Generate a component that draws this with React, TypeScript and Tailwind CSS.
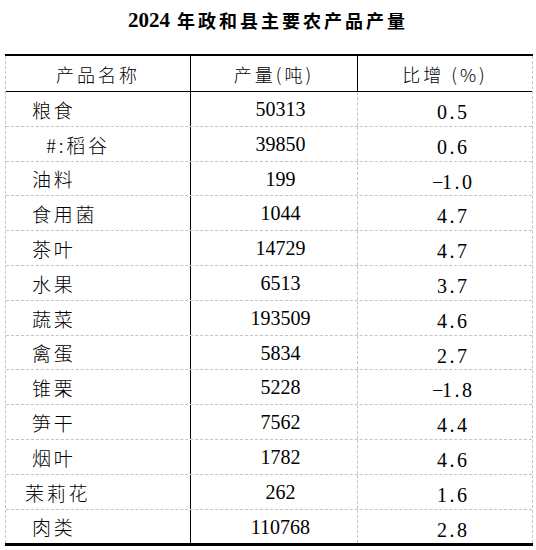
import React from "react";

type Row = { name: string; pl: string; value: string; pct: string; h: string };

const rows: Row[] = [
  { name: "粮食", pl: "pl-[26px]", value: "50313", pct: "0.5", h: "h-[35px]" },
  { name: "#:稻谷", pl: "pl-[40px]", value: "39850", pct: "0.6", h: "h-[35px]" },
  { name: "油料", pl: "pl-[26px]", value: "199", pct: "-1.0", h: "h-[34px]" },
  { name: "食用菌", pl: "pl-[26px]", value: "1044", pct: "4.7", h: "h-[35px]" },
  { name: "茶叶", pl: "pl-[26px]", value: "14729", pct: "4.7", h: "h-[35px]" },
  { name: "水果", pl: "pl-[26px]", value: "6513", pct: "3.7", h: "h-[35px]" },
  { name: "蔬菜", pl: "pl-[26px]", value: "193509", pct: "4.6", h: "h-[35px]" },
  { name: "禽蛋", pl: "pl-[26px]", value: "5834", pct: "2.7", h: "h-[34px]" },
  { name: "锥栗", pl: "pl-[26px]", value: "5228", pct: "-1.8", h: "h-[35px]" },
  { name: "笋干", pl: "pl-[26px]", value: "7562", pct: "4.4", h: "h-[35px]" },
  { name: "烟叶", pl: "pl-[26px]", value: "1782", pct: "4.6", h: "h-[35px]" },
  { name: "茉莉花", pl: "pl-[19px]", value: "262", pct: "1.6", h: "h-[35px]" },
  { name: "肉类", pl: "pl-[26px]", value: "110768", pct: "2.8", h: "h-[33px]" },
];

const cjk = { fontFamily: '"Noto Sans CJK SC", sans-serif' };
const serif = { fontFamily: '"Liberation Serif", "Noto Sans CJK SC", serif' };

function Pct({ s }: { s: string }) {
  return (
    <span className="flex">
      {s.split("").map((c, i) => (
        <span key={i} className="inline-block w-[10px] text-center">
          {c === "-" ? "−" : c}
        </span>
      ))}
    </span>
  );
}

export default function App() {
  return (
    <div className="w-[536px] h-[550px] bg-white text-black overflow-hidden">
      <div className="h-[54px] pt-[7px] flex justify-center items-start">
        <div className="flex items-center leading-[26px] font-bold">
          <span className="text-[21px] mr-[7px]" style={serif}>
            2024
          </span>
          <span className="text-[18px] tracking-[3px]" style={cjk}>
            年政和县主要农产品产量
          </span>
        </div>
      </div>
      <div className="ml-[5px] w-[528px] border-t-2 border-b-[3px] border-black">
        <div className="border-x border-dashed border-[#c4c4c4]">
          <div className="flex h-[36px] border-b border-black text-[18px] font-light tracking-[3px] leading-none">
            <div className="w-[185px] border-r border-black flex items-center justify-center" style={cjk}>
              产品名称
            </div>
            <div className="w-[167px] border-r border-black flex items-center justify-center" style={cjk}>
              产量(吨)
            </div>
            <div className="flex-1 flex items-center justify-center" style={cjk}>
              比增 (%)
            </div>
          </div>
          {rows.map((r, i) => (
            <div
              key={i}
              className={
                "flex " +
                r.h +
                (i < rows.length - 1 ? " border-b border-dashed border-[#c4c4c4]" : "")
              }
            >
              <div
                className={
                  "w-[185px] border-r border-solid border-black flex items-center text-[19px] font-light tracking-[2.7px] leading-none " +
                  r.pl
                }
                style={cjk}
              >
                {r.name}
              </div>
              <div
                className="w-[167px] border-r border-dashed border-[#c4c4c4] flex items-center justify-center pl-[13px] text-[20px] leading-none"
                style={serif}
              >
                {r.value}
              </div>
              <div
                className="flex-1 flex items-center justify-center pl-[14px] pt-[6px] text-[20px] leading-none"
                style={serif}
              >
                <Pct s={r.pct} />
              </div>
            </div>
          ))}
        </div>
      </div>
    </div>
  );
}
